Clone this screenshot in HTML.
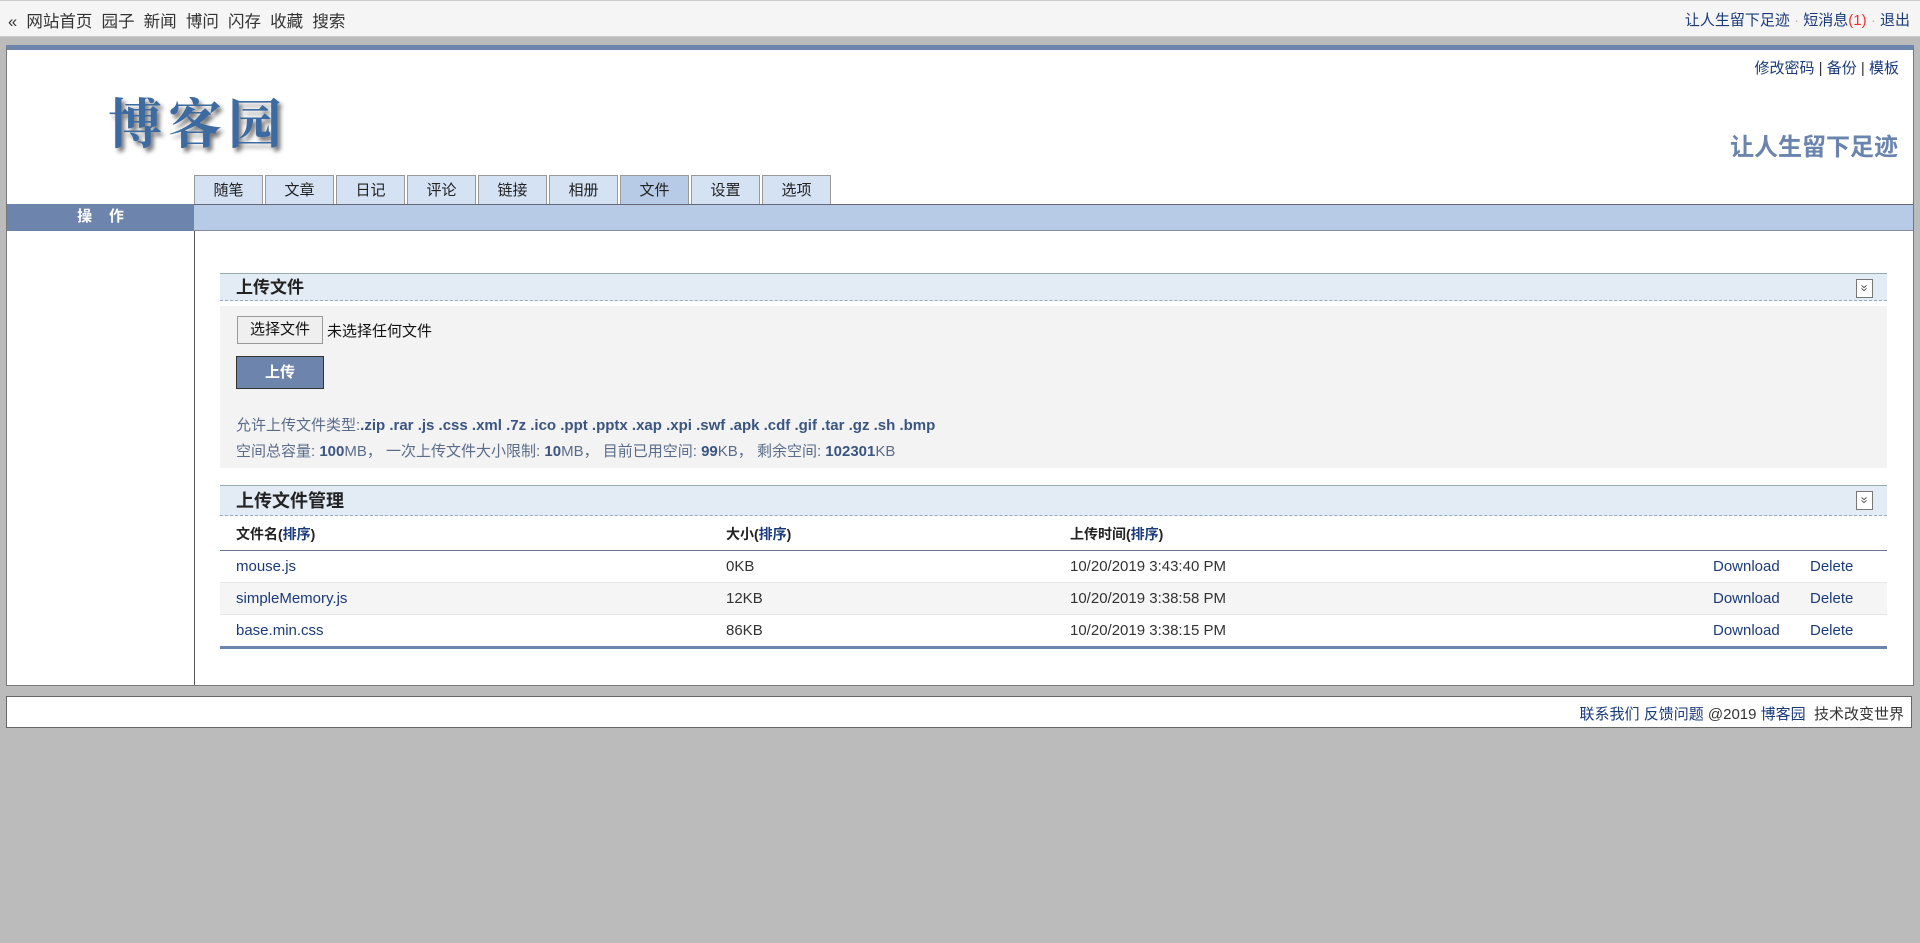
<!DOCTYPE html>
<html><head><meta charset="utf-8"><style>
*{margin:0;padding:0;box-sizing:border-box}
body{width:1920px;height:943px;background:#bbb;font-family:"Liberation Sans","Noto Sans CJK SC",sans-serif;font-size:15px;color:#333;position:relative;overflow:hidden}
a{color:#1a3a7a;text-decoration:none}
.abs{position:absolute}
#top{left:0;top:0;width:1920px;height:37px;background:#f5f5f5;border-top:1px solid #ccc;border-bottom:1px solid #ccc}
#main{left:6px;top:45px;width:1908px;height:641px;background:#fff;border:1px solid #777;border-top:5px solid #6d84ad}
.tab{position:absolute;top:175px;width:69px;height:30px;background:#d4e2f4;border:1px solid #999;border-bottom:none;text-align:center;line-height:30px;font-size:15px;color:#222}
.hdr{position:absolute;left:220px;width:1667px;background:#e3ebf5;border-top:1px solid #9aa;border-bottom:1px dashed #99a8c0;font-weight:bold;font-size:17px;color:#222;padding-left:16px}
.ico{position:absolute;right:14px;top:5px;width:17px;height:19px;border:1px solid #777;background:#fff;font-size:13px;line-height:16px;text-align:center;color:#555;font-weight:normal}
.ico span{display:inline-block;transform:rotate(90deg)}
.row{position:absolute;left:220px;width:1667px;height:32px;line-height:32px;border-bottom:1px solid #e6e6e6}
.row span{position:absolute}
</style></head><body>
<div id="top" class="abs">
 <div class="abs" style="left:8px;top:7px;color:#333;font-size:16.5px">«&nbsp; 网站首页 &nbsp;园子 &nbsp;新闻 &nbsp;博问 &nbsp;闪存 &nbsp;收藏 &nbsp;搜索</div>
 <div class="abs" style="right:10px;top:8px"><a>让人生留下足迹</a> <span style="color:#bbb">·</span> <a>短消息</a><span style="color:#e33">(1)</span> <span style="color:#bbb">·</span> <a>退出</a></div>
</div>
<div id="main" class="abs"></div>
<div class="abs" style="left:108px;top:82px;font-family:'Noto Serif CJK SC',serif;font-size:54px;font-weight:bold;color:#3d6aa0;letter-spacing:6px;text-shadow:3px 4px 4px #777">博客园</div>
<div class="abs" style="right:21px;top:57px;font-size:15px"><a>修改密码</a> | <a>备份</a> | <a>模板</a></div>
<div class="abs" style="right:22px;top:127px;font-size:24px;font-weight:bold;color:#6a84ad">让人生留下足迹</div>
<div class="tab" style="left:194px">随笔</div><div class="tab" style="left:265px">文章</div><div class="tab" style="left:336px">日记</div><div class="tab" style="left:407px">评论</div><div class="tab" style="left:478px">链接</div><div class="tab" style="left:549px">相册</div><div class="tab" style="left:620px;background:#b7cae6">文件</div><div class="tab" style="left:691px">设置</div><div class="tab" style="left:762px">选项</div>
<div class="abs" style="left:7px;top:204px;width:1906px;height:27px;background:#b7cae6;border-top:1px solid #667;border-bottom:1px solid #889"></div>
<div class="abs" style="left:7px;top:204px;width:187px;height:27px;background:#6d84ad;color:#fff;font-weight:bold;text-align:center;line-height:26px">操 &nbsp; &nbsp;作</div>
<div class="abs" style="left:194px;top:231px;width:1px;height:454px;background:#555"></div>
<div class="hdr" style="top:273px;height:28px;line-height:27px">上传文件<div class="ico"><span>»</span></div></div>
<div class="abs" style="left:220px;top:306px;width:1667px;height:162px;background:#f3f3f3"></div>
<div class="abs" style="left:237px;top:316px;width:86px;height:28px;background:#efefef;border:1px solid #999;text-align:center;line-height:26px;color:#111">选择文件</div>
<div class="abs" style="left:327px;top:320px;color:#111">未选择任何文件</div>
<div class="abs" style="left:236px;top:356px;width:88px;height:33px;background:#6d84ad;border:1px solid #333;color:#fff;font-weight:bold;text-align:center;line-height:31px">上传</div>
<div class="abs" style="left:236px;top:414px;font-size:15px;color:#5a6c88">允许上传文件类型:<b style="color:#3a5580">.zip .rar .js .css .xml .7z .ico .ppt .pptx .xap .xpi .swf .apk .cdf .gif .tar .gz .sh .bmp</b></div>
<div class="abs" style="left:236px;top:440px;font-size:15px;color:#5a6c88">空间总容量: <b style="color:#3a5580">100</b>MB， 一次上传文件大小限制: <b style="color:#3a5580">10</b>MB， 目前已用空间: <b style="color:#3a5580">99</b>KB， 剩余空间: <b style="color:#3a5580">102301</b>KB</div>
<div class="hdr" style="top:485px;height:31px;line-height:30px;font-size:18px">上传文件管理<div class="ico"><span>»</span></div></div>
<div class="abs" style="left:220px;top:518px;width:1667px;height:33px;line-height:32px;border-bottom:1px solid #6a7a90;font-weight:bold;font-size:14px;color:#222">
<span class="abs" style="left:16px">文件名(<a>排序</a>)</span><span class="abs" style="left:506px">大小(<a>排序</a>)</span><span class="abs" style="left:850px">上传时间(<a>排序</a>)</span></div>
<div class="row" style="top:551px"><span style="left:16px"><a>mouse.js</a></span><span style="left:506px">0KB</span><span style="left:850px">10/20/2019 3:43:40 PM</span><span style="left:1493px"><a>Download</a></span><span style="left:1590px"><a>Delete</a></span></div>
<div class="row" style="top:583px;background:#f5f5f5"><span style="left:16px"><a>simpleMemory.js</a></span><span style="left:506px">12KB</span><span style="left:850px">10/20/2019 3:38:58 PM</span><span style="left:1493px"><a>Download</a></span><span style="left:1590px"><a>Delete</a></span></div>
<div class="row" style="top:615px;border-bottom:none"><span style="left:16px"><a>base.min.css</a></span><span style="left:506px">86KB</span><span style="left:850px">10/20/2019 3:38:15 PM</span><span style="left:1493px"><a>Download</a></span><span style="left:1590px"><a>Delete</a></span></div>
<div class="abs" style="left:220px;top:646px;width:1667px;height:3px;background:#6d84ad"></div>
<div class="abs" style="left:6px;top:696px;width:1906px;height:32px;background:#fff;border:1px solid #666"></div>
<div class="abs" style="right:16px;top:703px;color:#333"><a>联系我们</a> <a>反馈问题</a> @2019 <a>博客园</a> &nbsp;技术改变世界</div>
</body></html>
